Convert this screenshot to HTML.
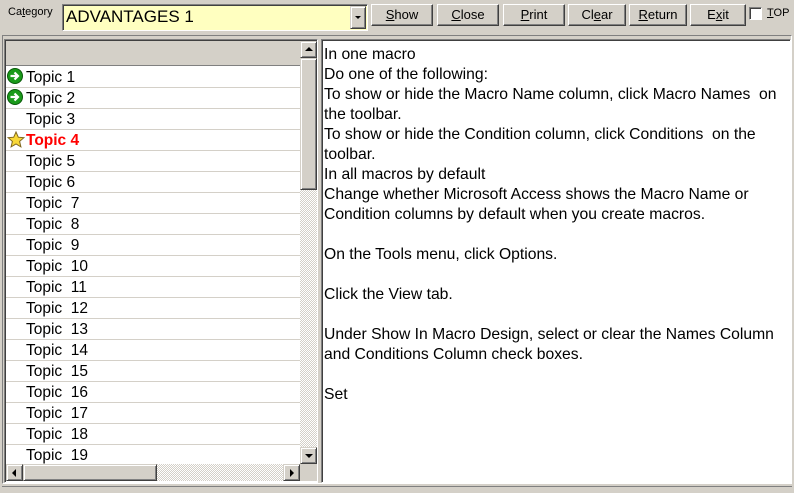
<!DOCTYPE html>
<html><head><style>
*{margin:0;padding:0;box-sizing:border-box}
body{width:794px;height:493px;background:#d4d0c8;position:relative;overflow:hidden;font-family:"Liberation Sans",Arial,sans-serif}
.abs{position:absolute}
.btn{position:absolute;top:4px;height:22px;background:#d4d0c8;border:1px solid;border-color:#fff #404040 #404040 #fff;box-shadow:inset -1px -1px 0 #808080;font-size:13px;text-align:center;line-height:20px;color:#000}
.sunk{border:1px solid;border-color:#808080 #fff #fff #808080;box-shadow:inset 1px 1px 0 #404040}
.row{position:absolute;left:0;width:294px;height:21px;border-bottom:1px solid #d4d0c8;font-size:15.5px;line-height:22px;padding-left:20px;color:#000}
.sb{position:absolute;background:#d4d0c8;border:1px solid;border-color:#d4d0c8 #404040 #404040 #d4d0c8;box-shadow:inset 1px 1px 0 #fff,inset -1px -1px 0 #808080}
.track{position:absolute;background-color:#eae8e4;background-image:repeating-conic-gradient(#d4d0c8 0 25%,#fff 0 50%);background-size:2px 2px}
.txt{position:absolute;left:324px;font-size:15.7px;color:#000;line-height:20px;white-space:nowrap}
</style></head><body>
<div class="abs" style="left:8px;top:6px;font-size:11px">Ca<u>t</u>egory</div>
<div class="abs sunk" style="left:62px;top:4px;width:306px;height:27px;background:#ffffc0"></div>
<div class="abs" style="left:66px;top:7px;font-size:17px;color:#000">ADVANTAGES 1</div>
<div class="sb" style="left:350px;top:6px;width:16px;height:23px"><div class="abs" style="left:4px;top:9px;width:0;height:0;border-left:3px solid transparent;border-right:3px solid transparent;border-top:3px solid #000"></div></div>
<div class="btn" style="left:371px;width:62px"><u>S</u>how</div>
<div class="btn" style="left:437px;width:62px"><u>C</u>lose</div>
<div class="btn" style="left:503px;width:62px"><u>P</u>rint</div>
<div class="btn" style="left:568px;width:58px">Cl<u>e</u>ar</div>
<div class="btn" style="left:629px;width:58px"><u>R</u>eturn</div>
<div class="btn" style="left:690px;width:56px">E<u>x</u>it</div>
<div class="abs sunk" style="left:749px;top:7px;width:13px;height:13px;background:#fff"></div>
<div class="abs" style="left:767px;top:7px;font-size:11px"><u>T</u>OP</div>
<div class="abs" style="left:2px;top:35px;width:790px;height:449px;border:1px solid;border-color:#808080 #fff #fff #808080"></div>
<div class="abs sunk" style="left:4px;top:39px;width:314px;height:444px;background:#fff;overflow:hidden">
 <div class="abs" style="left:1px;top:1px;width:294px;height:25px;background:#d4d0c8;border-bottom:1px solid #808080"></div>
 <div style="position:absolute;left:1px;top:27px;width:294px;height:420px">
  <div class="row" style="top:0">Topic 1</div>
  <div class="row" style="top:21px">Topic 2</div>
  <div class="row" style="top:42px">Topic 3</div>
  <div class="row" style="top:63px;color:#f00;font-weight:bold">Topic 4</div>
  <div class="row" style="top:84px">Topic 5</div>
  <div class="row" style="top:105px">Topic 6</div>
  <div class="row" style="top:126px">Topic &nbsp;7</div>
  <div class="row" style="top:147px">Topic &nbsp;8</div>
  <div class="row" style="top:168px">Topic &nbsp;9</div>
  <div class="row" style="top:189px">Topic &nbsp;10</div>
  <div class="row" style="top:210px">Topic &nbsp;11</div>
  <div class="row" style="top:231px">Topic &nbsp;12</div>
  <div class="row" style="top:252px">Topic &nbsp;13</div>
  <div class="row" style="top:273px">Topic &nbsp;14</div>
  <div class="row" style="top:294px">Topic &nbsp;15</div>
  <div class="row" style="top:315px">Topic &nbsp;16</div>
  <div class="row" style="top:336px">Topic &nbsp;17</div>
  <div class="row" style="top:357px">Topic &nbsp;18</div>
  <div class="row" style="top:378px">Topic &nbsp;19</div>
  <svg class="abs" style="left:1px;top:1px" width="17" height="17" viewBox="0 0 17 17"><circle cx="8" cy="8" r="7.5" fill="#1a9a1a" stroke="#0a5a0a"/><path d="M3.5 8h7M7.5 4.5l3.5 3.5-3.5 3.5" stroke="#fff" stroke-width="2.2" fill="none"/></svg>
  <svg class="abs" style="left:1px;top:22px" width="17" height="17" viewBox="0 0 17 17"><circle cx="8" cy="8" r="7.5" fill="#1a9a1a" stroke="#0a5a0a"/><path d="M3.5 8h7M7.5 4.5l3.5 3.5-3.5 3.5" stroke="#fff" stroke-width="2.2" fill="none"/></svg>
  <svg class="abs" style="left:1px;top:64px" width="18" height="18" viewBox="0 0 18 18"><path d="M9 1l2.3 5.2 5.6.5-4.3 3.7 1.3 5.5L9 13l-4.9 2.9 1.3-5.5L1.1 6.7l5.6-.5z" fill="#f8d838" stroke="#806820"/></svg>
 </div>
 <div class="sb" style="left:295px;top:1px;width:17px;height:17px"><div class="abs" style="left:4px;top:5px;border-left:4px solid transparent;border-right:4px solid transparent;border-bottom:4px solid #000"></div></div>
 <div class="track" style="left:295px;top:18px;width:17px;height:406px"></div>
 <div class="sb" style="left:295px;top:18px;width:17px;height:132px"></div>
 <div class="sb" style="left:295px;top:407px;width:17px;height:17px"><div class="abs" style="left:4px;top:6px;border-left:4px solid transparent;border-right:4px solid transparent;border-top:4px solid #000"></div></div>
 <div class="track" style="left:1px;top:424px;width:294px;height:17px"></div>
 <div class="sb" style="left:1px;top:424px;width:17px;height:17px"><div class="abs" style="left:5px;top:4px;border-top:4px solid transparent;border-bottom:4px solid transparent;border-right:4px solid #000"></div></div>
 <div class="sb" style="left:18px;top:424px;width:134px;height:17px"></div>
 <div class="sb" style="left:278px;top:424px;width:17px;height:17px"><div class="abs" style="left:6px;top:4px;border-top:4px solid transparent;border-bottom:4px solid transparent;border-left:4px solid #000"></div></div>
 <div class="abs" style="left:295px;top:424px;width:17px;height:17px;background:#d4d0c8"></div>
</div>
<div class="abs sunk" style="left:321px;top:39px;width:470px;height:444px;background:#fff"></div>
<div class="txt" style="top:45px">In one macro<br>Do one of the following:<br>To show or hide the Macro Name column, click Macro Names &nbsp;on<br>the toolbar.<br>To show or hide the Condition column, click Conditions &nbsp;on the<br>toolbar.<br>In all macros by default<br>Change whether Microsoft Access shows the Macro Name or<br>Condition columns by default when you create macros.<br><br>On the Tools menu, click Options.<br><br>Click the View tab.<br><br>Under Show In Macro Design, select or clear the Names Column<br>and Conditions Column check boxes.<br><br>Set</div>
<div class="abs" style="left:2px;top:486px;width:790px;height:7px;border-top:1px solid #808080"></div>
</body></html>
